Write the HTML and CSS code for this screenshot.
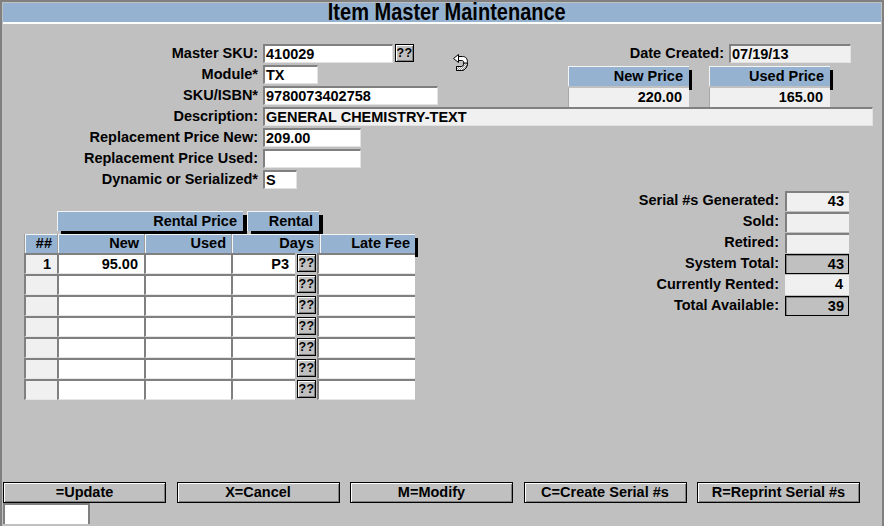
FILE: index.html
```html
<!DOCTYPE html>
<html>
<head>
<meta charset="utf-8">
<title>Item Master Maintenance</title>
<link rel="stylesheet" href="styles.css">
</head>
<body>
<div class="frame">
  <div class="titlebar"><span class="title">Item Master Maintenance</span></div>

  <div class="form">
    <div class="right">
      <div class="daterow">
        <span class="dlabel">Date Created:</span>
        <div class="fld ro w-date">07/19/13</div>
      </div>
      <div class="prices">
        <div class="pcol">
          <div class="phead">New Price</div>
          <div class="pval">220.00</div>
        </div>
        <div class="pcol">
          <div class="phead">Used Price</div>
          <div class="pval">165.00</div>
        </div>
      </div>
    </div>

    <div class="lbl">Master SKU:</div>
    <div class="fcell">
      <div class="fld w-sku">410029</div>
      <div class="qbtn">??</div>
      <svg class="undo" viewBox="0 0 17 19" width="17" height="19">
        <defs>
          <pattern id="dith" width="2" height="2" patternUnits="userSpaceOnUse">
            <rect width="2" height="2" fill="#ffffff"/>
            <rect width="1" height="1" fill="#9a9a9a"/>
            <rect x="1" y="1" width="1" height="1" fill="#9a9a9a"/>
          </pattern>
        </defs>
        <path d="M6.5 3.5 H10.5 C14 3.5 15.5 6 15.5 9.5 C15.5 13.5 13 17.5 9.5 17.5 H4.5 V13.5 H9.5 C11 13.5 11.8 11.8 11.8 10 C11.8 8.3 11 7.5 9.8 7.5 H6.5 Z" fill="#ffffff" stroke="#000" stroke-width="1"/>
        <path d="M4.5 13.5 H9.5 C11 13.5 11.8 11.8 11.8 10 H15.5 C15.5 13.5 13 17.5 9.5 17.5 H4.5 Z" fill="url(#dith)" stroke="#000" stroke-width="1"/>
        <path d="M1.5 5.5 L6.5 1.5 L6.5 9.5 Z" fill="#ffffff" stroke="#000" stroke-width="1" stroke-linejoin="round"/>
      </svg>
    </div>

    <div class="lbl">Module*</div>
    <div class="fcell"><div class="fld w-mod">TX</div></div>

    <div class="lbl">SKU/ISBN*</div>
    <div class="fcell"><div class="fld w-isbn">9780073402758</div></div>

    <div class="lbl">Description:</div>
    <div class="fcell wide"><div class="fld ro w-desc">GENERAL CHEMISTRY-TEXT</div></div>

    <div class="lbl">Replacement Price New:</div>
    <div class="fcell"><div class="fld w-rep">209.00</div></div>

    <div class="lbl">Replacement Price Used:</div>
    <div class="fcell"><div class="fld w-rep"></div></div>

    <div class="lbl">Dynamic or Serialized*</div>
    <div class="fcell"><div class="fld w-dyn">S</div></div>
  </div>

  <div class="mid">
    <div class="table">
      <div class="grow">
        <div class="gcell g-price">Rental Price</div>
        <div class="gcell g-rental">Rental</div>
      </div>
      <div class="hrow">
        <div class="hcell c-no">##</div>
        <div class="hcell c-new">New</div>
        <div class="hcell c-used">Used</div>
        <div class="hcell c-days">Days</div>
        <div class="hcell c-late">Late Fee</div>
      </div>
      <div class="drow">
        <div class="dcell num c-no">1</div>
        <div class="dcell c-new">95.00</div>
        <div class="dcell c-used"></div>
        <div class="dcell c-dd">P3</div>
        <div class="bcell"><div class="qbtn">??</div></div>
        <div class="dcell c-ll"></div>
      </div>
      <div class="drow">
        <div class="dcell num c-no"></div>
        <div class="dcell c-new"></div>
        <div class="dcell c-used"></div>
        <div class="dcell c-dd"></div>
        <div class="bcell"><div class="qbtn">??</div></div>
        <div class="dcell c-ll"></div>
      </div>
      <div class="drow">
        <div class="dcell num c-no"></div>
        <div class="dcell c-new"></div>
        <div class="dcell c-used"></div>
        <div class="dcell c-dd"></div>
        <div class="bcell"><div class="qbtn">??</div></div>
        <div class="dcell c-ll"></div>
      </div>
      <div class="drow">
        <div class="dcell num c-no"></div>
        <div class="dcell c-new"></div>
        <div class="dcell c-used"></div>
        <div class="dcell c-dd"></div>
        <div class="bcell"><div class="qbtn">??</div></div>
        <div class="dcell c-ll"></div>
      </div>
      <div class="drow">
        <div class="dcell num c-no"></div>
        <div class="dcell c-new"></div>
        <div class="dcell c-used"></div>
        <div class="dcell c-dd"></div>
        <div class="bcell"><div class="qbtn">??</div></div>
        <div class="dcell c-ll"></div>
      </div>
      <div class="drow">
        <div class="dcell num c-no"></div>
        <div class="dcell c-new"></div>
        <div class="dcell c-used"></div>
        <div class="dcell c-dd"></div>
        <div class="bcell"><div class="qbtn">??</div></div>
        <div class="dcell c-ll"></div>
      </div>
      <div class="drow">
        <div class="dcell num c-no"></div>
        <div class="dcell c-new"></div>
        <div class="dcell c-used"></div>
        <div class="dcell c-dd"></div>
        <div class="bcell"><div class="qbtn">??</div></div>
        <div class="dcell c-ll"></div>
      </div>
    </div>

    <div class="stats">
      <div class="slabel">Serial #s Generated:</div><div class="sbox in">43</div>
      <div class="slabel">Sold:</div><div class="sbox in"></div>
      <div class="slabel">Retired:</div><div class="sbox in"></div>
      <div class="slabel">System Total:</div><div class="sbox tot">43</div>
      <div class="slabel">Currently Rented:</div><div class="sbox flat">4</div>
      <div class="slabel">Total Available:</div><div class="sbox tot">39</div>
    </div>
  </div>

  <div class="footer">
    <div class="btns">
      <div class="btn">=Update</div>
      <div class="btn">X=Cancel</div>
      <div class="btn">M=Modify</div>
      <div class="btn">C=Create Serial #s</div>
      <div class="btn">R=Reprint Serial #s</div>
    </div>
    <div class="cmdbox"></div>
  </div>
</div>
</body>
</html>
```

FILE: styles.css
```css
html, body {
  margin: 0;
  padding: 0;
}
body {
  background: #c0c0c0;
  font-family: "Liberation Sans", Arial, sans-serif;
  font-weight: bold;
  font-size: 14.5px;
  color: #000;
}
.frame {
  width: 884px;
  height: 526px;
  box-sizing: border-box;
  border: 2px solid #808080;
  border-bottom: 0;
  display: flex;
  flex-direction: column;
  overflow: hidden;
}
.titlebar {
  margin: 1px 1px 0;
  height: 19px;
  flex: none;
  background: #95b3d1;
  border-bottom: 2px solid #ffffff;
  display: flex;
  justify-content: center;
  align-items: center;
  padding-left: 10px;
}
.title {
  display: inline-block;
  font-size: 23px;
  line-height: 21px;
  transform: scaleX(0.87);
  white-space: nowrap;
}

/* top form */
.form {
  display: grid;
  grid-template-columns: 256px 300px 1fr;
  grid-template-rows: repeat(7, 21px);
  column-gap: 5px;
  margin-top: 19px;
  flex: none;
}
.lbl {
  grid-column: 1;
  text-align: right;
  line-height: 21px;
  white-space: nowrap;
}
.fcell {
  grid-column: 2;
  display: flex;
  align-items: flex-start;
}
.fcell.wide {
  grid-column: 2 / 4;
}
.fld {
  box-sizing: border-box;
  height: 19px;
  margin-top: 1px;
  background: #ffffff;
  border-top: 2px solid #808080;
  border-left: 2px solid #808080;
  border-right: 1px solid #e2e2e2;
  border-bottom: 1px solid #e2e2e2;
  padding-left: 1px;
  line-height: 16px;
  white-space: nowrap;
  overflow: hidden;
  flex: none;
}
.fld.ro {
  background: #f0f0f0;
}
.w-sku { width: 130px; }
.w-mod { width: 55px; }
.w-isbn { width: 175px; }
.w-desc { width: 610px; }
.w-rep { width: 98px; }
.w-dyn { width: 34px; }
.w-date { width: 122px; }

.qbtn {
  box-sizing: border-box;
  width: 19px;
  height: 18px;
  margin: 1px 0 0 2px;
  flex: none;
  background: #c0c0c0;
  border: 1px solid #000;
  box-shadow: inset 1px 1px #ffffff, inset -1px -1px #808080;
  font-size: 12.5px;
  line-height: 16px;
  text-align: center;
  letter-spacing: 0.3px;
}
.undo {
  flex: none;
  margin: 10px 0 0 38px;
}

.right {
  grid-column: 3;
  grid-row: 1 / span 3;
}
.daterow {
  display: flex;
  align-items: flex-start;
  height: 21px;
}
.dlabel {
  width: 156px;
  margin-right: 5px;
  text-align: right;
  line-height: 21px;
  white-space: nowrap;
}
.prices {
  display: flex;
  gap: 20px;
  margin-top: 2px;
}
.pcol {
  width: 121px;
  position: relative;
}
.pcol::after {
  content: "";
  position: absolute;
  left: 121px;
  top: 4px;
  width: 3px;
  height: 20px;
  background: #000;
}
.phead {
  box-sizing: border-box;
  height: 20px;
  background: #95b3d1;
  border-top: 1px solid #f4f4f4;
  border-left: 1px solid #f4f4f4;
  text-align: right;
  padding-right: 6px;
  line-height: 18px;
}
.pval {
  box-sizing: border-box;
  height: 19px;
  margin-top: 2px;
  background: #f0f0f0;
  border-left: 1px solid #a8a8a8;
  text-align: right;
  padding-right: 7px;
  line-height: 19px;
}

/* middle */
.mid {
  display: flex;
  align-items: flex-start;
  flex: none;
}
.table {
  margin: 21px 0 0 22px;
}
.grow {
  display: flex;
  margin-left: 33px;
  margin-bottom: 3px;
}
.gcell {
  box-sizing: border-box;
  height: 20px;
  background: #95b3d1;
  border-top: 1px solid #f4f4f4;
  border-left: 1px solid #f4f4f4;
  text-align: right;
  padding-right: 6px;
  line-height: 18px;
  box-shadow: 4px 4px 0 #000;
}
.g-price { width: 186px; margin-right: 4px; }
.g-rental { width: 72px; }

.hrow {
  display: flex;
}
.hcell {
  box-sizing: border-box;
  height: 19px;
  background: #95b3d1;
  border-left: 1px solid #a0a0a0;
  box-shadow: inset 1px 1px #f4f4f4;
  text-align: right;
  padding-right: 5px;
  line-height: 19px;
}
.hcell.c-late {
  box-shadow: inset 1px 1px #f4f4f4, 3px 4px 0 #000;
}
.c-no { width: 33px; }
.c-new { width: 87px; }
.c-used { width: 87px; }
.c-days { width: 88px; }
.c-late { width: 96px; }
.c-dd { width: 64px; }
.c-ll { width: 98px; }

.drow {
  display: flex;
  height: 21px;
}
.dcell {
  box-sizing: border-box;
  height: 21px;
  background: #ffffff;
  border-top: 2px solid #808080;
  border-left: 2px solid #808080;
  border-bottom: 1px solid #e6e6e6;
  text-align: right;
  padding-right: 6px;
  line-height: 18px;
}
.dcell.num {
  background: #f0f0f0;
}
.bcell {
  width: 22px;
  display: flex;
  align-items: flex-start;
}
.bcell .qbtn {
  margin: 1px 0 0 2px;
}

.stats {
  margin-left: auto;
  margin-right: 33px;
  display: grid;
  grid-template-columns: auto 64px;
  grid-auto-rows: 21px;
  column-gap: 6px;
}
.slabel {
  text-align: right;
  line-height: 21px;
  white-space: nowrap;
}
.sbox {
  box-sizing: border-box;
  height: 20px;
  margin-top: 1px;
  text-align: right;
  padding-right: 5px;
  line-height: 17px;
}
.sbox.in {
  background: #f0f0f0;
  border-top: 2px solid #808080;
  border-left: 2px solid #808080;
}
.sbox.flat {
  background: #f0f0f0;
  line-height: 19px;
  padding-right: 6px;
}
.sbox.tot {
  background: #c0c0c0;
  border: 1px solid #000;
  box-shadow: inset 1px 1px #808080;
  line-height: 18px;
  padding-right: 4px;
}

/* footer */
.footer {
  margin-top: auto;
  padding: 0 0 2px 1px;
  flex: none;
}
.btns {
  display: flex;
  gap: 10.5px;
}
.btn {
  box-sizing: border-box;
  width: 163px;
  height: 21px;
  background: #c0c0c0;
  border: 1px solid #000;
  box-shadow: inset 1px 1px #ffffff, inset -1px -1px #808080;
  text-align: center;
  line-height: 19px;
  white-space: nowrap;
}
.cmdbox {
  box-sizing: border-box;
  width: 87px;
  height: 21px;
  background: #ffffff;
  border: 2px solid #808080;
  border-bottom: 0;
}
```
